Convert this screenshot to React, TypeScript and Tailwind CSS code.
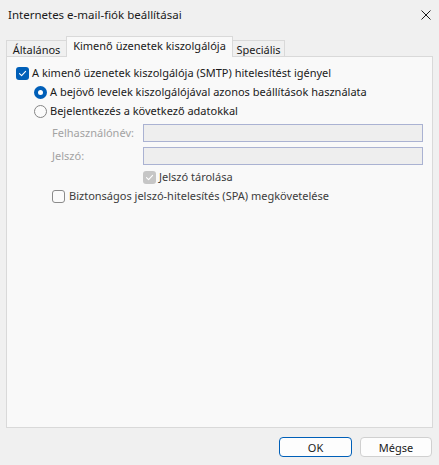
import React from 'react';

const font = { fontFamily: '"Noto Sans", "Open Sans", sans-serif' };

function CheckBox({ checked, disabled }: { checked?: boolean; disabled?: boolean }) {
  if (checked) {
    return (
      <span
        className={`flex h-[13px] w-[13px] shrink-0 items-center justify-center rounded-[3px] ${
          disabled ? 'bg-[#c6c6c6]' : 'bg-[#005fb8]'
        }`}
      >
        <svg width="9" height="9" viewBox="0 0 9 9" fill="none">
          <path d="M1.5 4.6 L3.6 6.6 L7.6 2.3" stroke="white" strokeWidth="1.1" strokeLinecap="round" strokeLinejoin="round" />
        </svg>
      </span>
    );
  }
  return <span className="h-[13px] w-[13px] shrink-0 rounded-[3px] border border-[#8b8b8b] bg-[#fbfbfb]" />;
}

function Radio({ checked }: { checked?: boolean }) {
  if (checked) {
    return (
      <span className="flex h-[13px] w-[13px] shrink-0 items-center justify-center rounded-full bg-[#005fb8]">
        <span className="h-[5px] w-[5px] rounded-full bg-white" />
      </span>
    );
  }
  return <span className="h-[13px] w-[13px] shrink-0 rounded-full border border-[#858585] bg-[#fbfbfb]" />;
}

export default function App() {
  return (
    <div className="flex h-[465px] w-[439px] flex-col whitespace-nowrap bg-[#f0f0f0] text-[11px] text-[#1a1a1a]" style={font}>
      {/* title bar */}
      <div className="flex h-[29px] items-center justify-between pl-[8px] pr-[8px] text-[11.5px]">
        <span>Internetes e-mail-fiók beállításai</span>
        <svg width="10" height="10" viewBox="0 0 10 10" className="mt-[1px]">
          <path d="M0.5 0.5 L9.5 9.5 M9.5 0.5 L0.5 9.5" stroke="#1a1a1a" strokeWidth="1" />
        </svg>
      </div>

      {/* tabs */}
      <div className="mt-[8px] flex h-[20px] items-end px-[6px]">
        <div className="flex h-[17px] w-[60px] items-center justify-center border border-b-0 border-r-0 border-[#d9d9d9] bg-[#f0f0f0] pt-[1px] leading-none">
          Általános
        </div>
        <div className="relative z-10 flex h-[21px] w-[167px] items-start justify-center border border-b-0 border-[#d9d9d9] bg-[#f9f9f9] pt-[2px] leading-[14px]">
          Kimenő üzenetek kiszolgálója
        </div>
        <div className="flex h-[17px] w-[52px] items-center justify-center border border-b-0 border-l-0 border-[#d9d9d9] bg-[#f0f0f0] pt-[1px] leading-none">
          Speciális
        </div>
      </div>

      {/* panel */}
      <div className="mx-[6px] -mt-px flex h-[372px] flex-col border border-[#d9d9d9] bg-[#f9f9f9] pl-[9px] pt-[7px]">
        <div className="flex h-[19px] items-center gap-[3px]">
          <CheckBox checked />
          <span>A kimenő üzenetek kiszolgálója (SMTP) hitelesítést igényel</span>
        </div>
        <div className="ml-[18px] flex h-[19px] items-center gap-[3px]">
          <Radio checked />
          <span>A bejövő levelek kiszolgálójával azonos beállítások használata</span>
        </div>
        <div className="ml-[18px] flex h-[19px] items-center gap-[3px]">
          <Radio />
          <span>Bejelentkezés a következő adatokkal</span>
        </div>

        <div className="ml-[36px] mt-[3px] flex h-[18px] items-center">
          <span className="w-[91px] text-[#a3a3a3]">Felhasználónév:</span>
          <div className="h-[18px] w-[280px] border border-[#aab2d2] bg-[#eeeeee]" />
        </div>
        <div className="ml-[36px] mt-[5px] flex h-[18px] items-center">
          <span className="w-[91px] text-[#a3a3a3]">Jelszó:</span>
          <div className="h-[18px] w-[280px] border border-[#aab2d2] bg-[#eeeeee]" />
        </div>
        <div className="ml-[127px] mt-[3px] flex h-[19px] items-center gap-[3px] text-[#3c3c3c]">
          <CheckBox checked disabled />
          <span>Jelszó tárolása</span>
        </div>
        <div className="ml-[36px] flex h-[19px] items-center gap-[4px] text-[#3c3c3c]">
          <CheckBox />
          <span>Biztonságos jelszó-hitelesítés (SPA) megkövetelése</span>
        </div>
      </div>

      {/* buttons */}
      <div className="mt-[9px] flex justify-end gap-[8px] pr-[7px]">
        <button className="h-[20px] w-[73px] rounded-[4px] border border-[#005fb8] bg-[#fdfdfd] leading-none text-[#1a1a1a]">
          OK
        </button>
        <button className="h-[20px] w-[72px] rounded-[4px] border border-[#d0d0d0] bg-[#fdfdfd] leading-none text-[#1a1a1a]">
          Mégse
        </button>
      </div>
    </div>
  );
}
